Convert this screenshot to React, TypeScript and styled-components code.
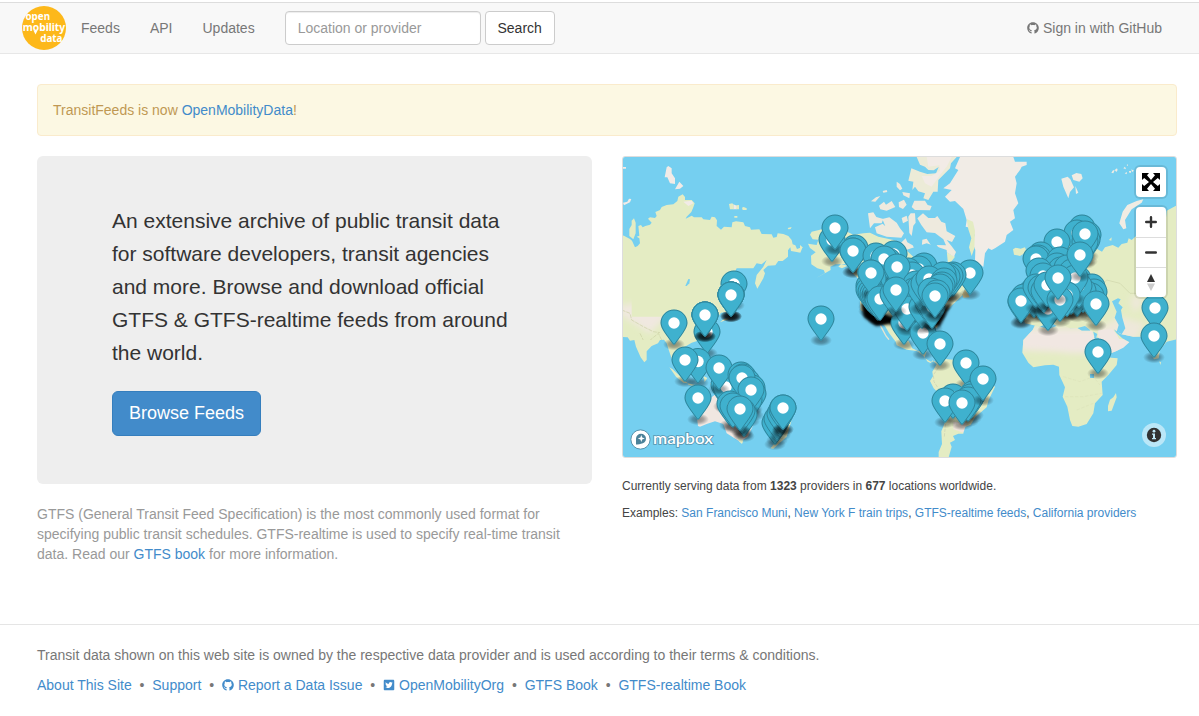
import React from "react";
import styled, { createGlobalStyle } from "styled-components";
import { FaGithub, FaTwitterSquare } from "react-icons/fa";

const GlobalStyle = createGlobalStyle`
  *, *::before, *::after { box-sizing: border-box; }
  body {
    margin: 0;
    background: #fff;
    color: #333;
    font: 14px/20px "Liberation Sans", Arial, sans-serif;
  }
`;

const Page = styled.div`
  padding-top: 2px;
  min-height: 716px;
  overflow: hidden;
`;

const Navbar = styled.header`
  display: flex;
  align-items: center;
  height: 52px;
  padding: 0 37px 0 22px;
  background: #f8f8f8;
  border-top: 1px solid #ddd;
  border-bottom: 1px solid #e7e7e7;
`;

const Logo = styled.svg`
  display: block;
  width: 44px;
  height: 44px;
`;

const NavLink = styled.a`
  padding: 15px;
  color: #777;
  text-decoration: none;
  white-space: nowrap;
`;

const SearchForm = styled.form`
  display: flex;
  gap: 4px;
  margin-left: 15px;
`;

const SearchInput = styled.input`
  width: 196px;
  height: 34px;
  padding: 6px 12px;
  font: inherit;
  border: 1px solid #ccc;
  border-radius: 4px;
  background: #fff;
  box-shadow: inset 0 1px 1px rgba(0, 0, 0, 0.075);
  &::placeholder { color: #999; opacity: 1; }
`;

const SearchButton = styled.button`
  width: 70px;
  height: 34px;
  padding: 0;
  font: inherit;
  color: #333;
  border: 1px solid #ccc;
  border-radius: 4px;
  background: #fff;
`;

const SignIn = styled.a`
  display: flex;
  align-items: center;
  gap: 4px;
  margin-left: auto;
  color: #777;
  text-decoration: none;
`;

const Link = styled.a`
  color: #428bca;
  text-decoration: none;
`;

const Container = styled.main`
  padding: 0 22px 0 37px;
`;

const Alert = styled.div`
  margin-top: 30px;
  padding: 15px;
  height: 52px;
  color: #c09853;
  background: #fcf8e3;
  border: 1px solid #faebcc;
  border-radius: 4px;
`;

const Columns = styled.div`
  display: grid;
  grid-template-columns: 555px 555px;
  gap: 30px;
  margin-top: 20px;
  height: 468px;
`;

const Hero = styled.section`
  height: 328px;
  padding: 48px 75px;
  background: #eee;
  border-radius: 6px;
`;

const HeroText = styled.p`
  margin: 0 0 22px;
  font-size: 21px;
  line-height: 33px;
  white-space: nowrap;
`;

const HeroButton = styled.a`
  display: block;
  width: 149px;
  height: 45px;
  line-height: 43px;
  font-size: 18px;
  text-align: center;
  color: #fff;
  background: #428bca;
  border: 1px solid #357ebd;
  border-radius: 6px;
`;

const Explanation = styled.p`
  margin: 20px 0 0;
  color: #999;
  white-space: nowrap;
`;

const MapFrame = styled.div`
  position: relative;
  height: 302px;
  border: 1px solid #ddd;
  border-radius: 3px;
  overflow: hidden;
`;

const MapCanvas = styled.svg`
  display: block;
  width: 553px;
  height: 300px;
`;

const Controls = styled.div`
  position: absolute;
  top: 10px;
  right: 10px;
  display: flex;
  flex-direction: column;
  gap: 10px;
`;

const ControlGroup = styled.div`
  width: 30px;
  border-radius: 4px;
  background: #fff;
  box-shadow: 0 0 0 2px rgba(0, 0, 0, 0.1);
`;

const Control = styled.div`
  display: flex;
  align-items: center;
  justify-content: center;
  height: 30px;
  & + & { border-top: 1px solid #ddd; }
  svg { display: block; }
`;

const Info = styled.div`
  position: absolute;
  right: 10px;
  bottom: 10px;
  width: 24px;
  height: 24px;
  border-radius: 12px;
  background: rgba(255, 255, 255, 0.5);
  svg { display: block; }
`;

const Small = styled.p<{ $top: number }>`
  margin: ${(p) => p.$top}px 0 0;
  font-size: 12px;
  line-height: 17px;
  color: #444;
  white-space: nowrap;
`;

const Footer = styled.footer`
  padding: 20px 37px 0;
  border-top: 1px solid #e5e5e5;
  color: #777;
`;

const FooterText = styled.p`
  margin: 0 0 10px;
`;

const FooterLinks = styled.div`
  display: flex;
  white-space: pre;
`;

const FooterLink = styled(Link)`
  display: flex;
  align-items: center;
  gap: 4px;
`;

const Dot = styled.span`
  width: 20.6px;
  text-align: center;
`;

type Point = [number, number];

const asiaPins: Point[] = [
  [734, 284], [731, 295], [731, 295], [731, 295], [731, 295], [731, 295],
  [674, 323], [707, 332], [705, 315], [705, 315], [705, 315], [705, 315],
  [698, 361.5], [685, 360], [724, 385], [726, 387], [719, 368], [698, 398],
  [741, 375], [743, 377], [747, 382], [752, 388], [753, 394], [749, 400], [742, 378],
  [751, 390], [730, 404], [733, 406], [743, 413], [744, 415], [742, 411], [740, 409],
  [775, 423], [777, 419], [780, 414], [782, 410], [783, 408], [783, 408],
];

const americaPins: Point[] = [
  [821, 319], [832, 240], [835, 228], [855, 248], [853, 251], [853, 251],
  [894, 254], [876, 256], [888, 261], [884, 259], [924, 266], [919, 269],
  [908, 271], [912, 275], [897, 267], [871, 273], [873, 279],
  [970, 273], [953, 275], [950, 276], [947, 277], [943, 275],
  [904, 323], [869, 286], [869, 290], [871, 292], [873, 294], [875, 295], [877, 297],
  [878, 299], [871, 273], [880, 299], [916, 284], [914, 291], [918, 296], [921, 300], [926, 294],
  [905, 305], [907, 309], [923, 333], [922, 307], [928, 303], [931, 304],
  [932, 307], [920, 288], [924, 284], [929, 279], [944, 281], [942, 285], [940, 287],
  [931, 291], [937, 293], [935, 296], [893, 294], [896, 290], [940, 344],
  [966, 363], [953, 397], [973, 394], [971, 397], [968, 400], [983, 379],
  [945, 401], [962, 403],
];

const europePins: Point[] = [
  [1082, 228], [1077, 233], [1088, 235], [1087, 240], [1085, 242], [1085, 234],
  [1057, 242], [1041, 255], [1038, 258], [1036, 259], [1060, 260], [1057, 266],
  [1061, 270], [1067, 268], [1072, 272], [1039, 271], [1043, 276],
  [1078, 279], [1074, 282], [1092, 287], [1094, 292], [1091, 296], [1083, 291],
  [1077, 295], [1071, 293], [1079, 286], [1075, 278], [1080, 255],
  [1032, 292], [1034, 296], [1037, 291], [1021, 302], [1024, 297], [1021, 301],
  [1048, 309], [1036, 287], [1041, 288], [1044, 291], [1050, 286], [1047, 285],
  [1067, 295], [1060, 300], [1058, 278], [1096, 304], [1155, 308], [1154, 336], [1098, 352],
];

const Pin = ({ at }: { at: Point }) => (
  <g transform={`translate(${at[0] - 13.5} ${at[1] - 13.5})`}>
    <ellipse cx="13.5" cy="34.8" rx="11" ry="6" fill="url(#pin-shadow)" />
    <path
      fill="#3fb1ce"
      d="M27 13.5C27 19.07 20.25 27 14.75 34.5C14 35.5 13 35.5 12.25 34.5C6.75 27 0 19.2 0 13.5C0 6.04 6.04 0 13.5 0S27 6.04 27 13.5Z"
    />
    <path
      fill="none"
      stroke="#000"
      strokeOpacity=".25"
      d="M26.5 13.5C26.5 18.8 19.8 26.7 14.3 34.2C13.8 34.9 13.2 34.9 12.7 34.2C7.2 26.7 .5 18.8 .5 13.5C.5 6.3 6.3 .5 13.5 .5S26.5 6.3 26.5 13.5Z"
    />
    <circle cx="13.5" cy="13.5" r="5.7" fill="#fff" />
  </g>
);

const WorldMap = () => (
  <MapCanvas viewBox="623 157 553 300">
    <defs>
      <radialGradient id="pin-shadow">
        <stop offset="0" stopColor="#000" stopOpacity=".42" />
        <stop offset=".5" stopColor="#000" stopOpacity=".3" />
        <stop offset=".8" stopColor="#000" stopOpacity=".12" />
        <stop offset="1" stopColor="#000" stopOpacity="0" />
      </radialGradient>
      <filter id="soft" x="-30%" y="-30%" width="160%" height="160%">
        <feGaussianBlur stdDeviation="1.6" />
      </filter>
      <filter id="terrain" x="-30%" y="-30%" width="160%" height="160%">
        <feGaussianBlur stdDeviation="9" />
      </filter>
      <clipPath id="asia-clip">
        <path d="M0 255L20 258L35 270V500H290V560L230 600L150 570H0Z" />
      </clipPath>
      <clipPath id="east-clip">
        <path d="M310 400H560V568L510 560L480 590L458 560L430 560L392 552L371 537L380 560L330 565L307 560L300 540Z" />
      </clipPath>
      <clipPath id="africa-clip">
        <path id="africa" d="M135 75L175 88L215 72L240 85L262 84L275 92L307 92L315 120L330 150L345 172L383 175L380 195L355 225L335 245L338 285L315 310L310 340L290 372L265 380L247 378L240 360L232 320L218 290L225 262L208 225L207 200L190 194L165 196L130 202L115 188L97 158L100 120L128 90Z" />
      </clipPath>
    </defs>
    <rect x="623" y="157" width="553" height="300" fill="#75cff0" />

    {/* Asia and Oceania */}
    <g transform="translate(620 150) scale(.33333)" fill="#e4ecc3">
      <path d="M0 255L12 257L20 262L30 267L36 272L45 292L53 288L60 280L58 265L50 260L58 257L55 228L63 225L68 232L76 228L90 224L95 218L84 206L90 202L105 204L110 198L106 186L120 180L125 171L140 165L160 163L172 153L175 140L188 133L195 141L195 150L215 150L224 160L220 172L214 186L200 200L197 206L215 197L222 202L245 202L250 208L270 210L275 200L285 202L291 211L290 228L303 239L312 230L335 232L337 217L348 214L370 217L375 228L390 232L393 239L418 238L425 252L455 253L460 263L470 261L473 250L490 252L505 258L515 270L518 283L526 286L531 297L548 291L541 308L530 306L513 303L511 292L504 301L504 320L488 333L475 333L466 346L444 347L430 360L435 370L430 385L412 416L405 400L410 375L430 350L440 330L425 343L410 340L400 355L350 355L343 368L350 390L366 405L365 440L338 455L330 485L303 488L290 505L270 530L240 570L215 578L195 590L198 608L180 604L165 625L160 640L148 605L140 580L132 569L120 570L114 580L95 588L80 604V630L73 637L62 622L48 590L43 570L30 572L23 562L0 560Z" />
      <path d="M42 205L47 218V250L40 268L28 258V237L35 225V212Z" />
      <path fill="#f2ebe7" d="M145 48L155 55L155 70L165 85V102L150 100L142 82H134L140 52ZM178 95L190 108L180 116L165 118ZM9 158L22 155L27 146L34 147L30 157L12 166ZM9 51H18V56H9ZM340 163L352 168L350 178H340ZM190 155L215 152L220 160L205 168Z" />
      <path d="M327 162L337 160L341 165V178H330ZM349 166L357 165L357 178H349ZM366 173L371 171L380 175V180H368ZM343 198H352V203H343ZM503 234L515 231L512 237L505 238Z" />
      <g clipPath="url(#asia-clip)">
        <path filter="url(#terrain)" fill="#f0e8e0" d="M-10 470L60 455L120 450L190 430L230 450L190 490L140 500L120 520L90 550L10 500Z" />
        <path fill="none" stroke="#cbd0a4" strokeWidth="2" strokeDasharray="12 3" d="M5 480L30 490L35 510L70 530L100 545L120 548M60 550L72 575L85 575L115 550L125 570" />
      </g>
      <path fill="#75cff0" d="M196 408L205 387L210 388L208 400L200 408Z" />
      <path d="M148 652L158 658L190 688L203 700L190 698L168 680ZM203 700L235 707L230 710L205 704ZM250 678L262 684L254 696Z" />
      <path d="M300 517L325 508L330 500L310 508ZM270 700L310 720L340 745H290Z" />
      <path fill="#f0e7e1" d="M234 828L228 780L242 758L275 742L290 730H310L330 755L345 725L365 760L394 800L400 824L384 860L360 875L320 850L310 822L285 814L260 822L240 830Z" />
      <path d="M352 860L370 872L366 882L358 875ZM452 895L475 865L515 810L500 860L460 896Z" />
    </g>

    {/* North America, Arctic islands and Greenland */}
    <g transform="translate(800 150) scale(.33333)" fill="#e4ecc3">
      <path d="M100 225L60 239L35 245L30 254L38 268L55 269L50 285L24 281L30 294L47 307L33 317L34 343L52 355L71 360L75 369L50 383L60 378L92 360L91 350L106 343L145 342L158 370L175 386L182 480L260 530L340 500L410 535L440 480L460 462L488 435L495 415L460 365L450 340L465 320L440 307L390 300L370 292L340 304L315 282L280 270L235 260L210 248L190 250L160 254Z" />
      <path fill="#f1ece6" d="M480 21L465 55L475 60L450 100L430 115L455 120L435 140L450 155L465 153L490 177L500 210L497 230L515 235L524 255L517 277L526 300L525 330L550 351L555 310L565 295L575 300L585 295L615 275L620 255L640 240L630 215L645 205L640 180L655 160L645 130L650 100L645 80L660 60L665 50L680 45L680 35L645 35L640 21Z" />
      <path d="M500 207L519 215L525 242L523 295L515 318L507 292L514 265L505 238Z" />
      <path fill="#ecebd7" d="M350 21H470L453 40L450 55L430 75L415 90L413 125L400 125L385 150L370 145L375 130L355 124L345 110L337 120L340 95L325 92L334 55L360 65L382 72L408 70L416 51L401 61L385 60L375 50L360 44Z" />
      <path fill="#f2ebe6" d="M380 21H455L440 50L420 75L395 110L375 100L365 78L395 78L420 62L418 46L385 50Z" />
      <path fill="#eeeade" d="M343 152H375L383 165L395 168L390 181L345 180L335 171ZM213 154L228 142L241 138L226 155ZM248 123L260 120L262 126L250 128ZM290 95L300 102L307 116L300 121L290 110ZM307 126L330 130L328 145L310 136ZM237 167L252 155L258 164L275 153L286 171L260 182L241 178ZM296 157L312 149L320 164L309 177L297 171ZM204 190L220 187L229 201L250 207L245 220L222 220L210 235ZM225 232L248 221L256 229L247 207L268 202L290 218L300 235L312 250L304 263L260 260L230 250ZM305 204L320 197L324 212L309 220ZM325 200L332 190H345L347 218L340 227L335 258L328 249ZM362 196L369 190L385 204L405 204L412 198L424 215L436 220L440 244L466 258L456 276L440 270L455 289L468 306L462 320L440 307L418 296L410 285L438 286L430 268L405 249L380 247L364 225L352 205ZM367 269L380 266L396 290L381 296L365 294ZM303 278L317 265L322 277L338 286L350 308L325 302Z" />
      <path fill="#75cff0" d="M318 300L340 320L355 360L400 380L430 340L445 355L440 300L380 280Z" />
      <path fill="#c9bf8c" d="M487 433L495 417L503 430L509 442L490 443Z" />
      <path d="M0 285L8 292L0 300ZM115 350L123 342L143 347L126 355Z" />
    </g>

    {/* Central and South America */}
    <g transform="translate(800 300) scale(.33333)" fill="#e4ecc3">
      <path d="M250 70L267 99L287 125L290 136L320 149L351 153L370 167L383 185L392 189L397 181L410 193L397 215L399 229L390 243L401 265L415 279L431 330L434 370L424 394L426 432L416 456V472H446L455 440L450 428L465 420L459 408L475 401H490V383L512 374L527 350L560 322L566 300L585 260L565 242L510 198L465 180L437 177L415 190L402 182L395 187L373 174L380 154L355 154L337 145L327 125L300 90L280 70Z" />
      <path fill="none" stroke="#e7e5d0" strokeWidth="4" d="M241 76L258 108L267 119" />
      <path fill="#efe4da" d="M460 365L500 370L490 398L460 388Z" />
      <path fill="none" stroke="#c8ceb0" strokeWidth="2" strokeDasharray="10 4" d="M415 203L400 225L402 245L418 270L440 335L433 410" />
    </g>

    {/* Europe and Russia */}
    <g transform="translate(990 150) scale(.33333)" fill="#e4ecc3">
      <path d="M560 166L530 182L525 235L490 240L445 252L425 270L416 265L412 278L395 282L385 293L368 285L345 292L336 305L315 293L285 240L265 240L225 305L190 330L165 360L130 402L110 435L90 460L105 520L150 530L180 515L210 535L260 535L285 528L300 540L307 560L330 565L350 615L385 600L417 576L397 565L380 550L371 537L392 552L430 560L458 560L475 600L492 628L506 625L510 600L530 575L560 568Z" />
      <path d="M69 298L77 293L92 296L105 292L110 306L90 318L72 314ZM357 270L365 262L364 272Z" />
      <path fill="#f0ece3" d="M460 148L455 158L425 178L405 210L409 235L400 238L388 220L398 185L412 165L440 153ZM214 86L233 80L241 88L252 112L240 126L235 145L220 110ZM245 76L259 69L274 72L278 85L268 95L250 90ZM256 108L265 128L258 132ZM364 68L369 61H374L370 70ZM374 60L381 55L383 60L379 66ZM400 55L405 50L408 58ZM404 70L411 66L410 73ZM410 45L414 43L413 49ZM417 63H423V68H418ZM424 58L432 62L426 66Z" />
      <g clipPath="url(#east-clip)">
        <path fill="#eee8da" filter="url(#terrain)" d="M420 440H455V465L430 490ZM325 535L390 500L465 520L440 570L360 610Z" />
      </g>
      <path fill="#75cff0" d="M366 454L384 445L392 448L385 460L398 472L393 480L397 503L406 535L395 553L380 545L386 525L374 503L380 485Z" />
      <path fill="none" stroke="#d6ddb3" strokeWidth="3" d="M320 420L350 390L390 400L420 430L470 430" />
    </g>

    {/* Africa */}
    <g transform="translate(990 300) scale(.33333)">
      <use href="#africa" fill="#e4ecc3" />
      <g clipPath="url(#africa-clip)">
        <path filter="url(#terrain)" fill="#f1e7e2" d="M90 85L320 85L380 155L330 160L245 160L200 155L90 150Z" />
        <path fill="none" stroke="#dce3ba" strokeWidth="2" strokeDasharray="10 5" d="M220 230L270 245L310 230L330 255M225 290H280L335 280M260 330L310 310" />
      </g>
      <path fill="#e4ecc3" d="M378 279L380 292L365 332L354 334L354 318L360 299L370 292ZM508 184L513 187L511 195Z" />
      <path fill="#75cff0" d="M310 95L322 102L318 114L330 139L344 166L337 170L316 125ZM300 222H312V234H300Z" />
      <path fill="#f1e7e2" d="M325 90L367 88L380 103L388 117L400 118L418 127L400 143L375 155L352 163L333 130L324 108Z" />
    </g>

    {/* Merged shadows below the densest clusters */}
    <path filter="url(#soft)" fill="#000" d="M861 302L864 317L876 326L890 324L899 330L920 326L940 326L952 302L930 320L890 316Z" />
    <path filter="url(#soft)" fill="#000" opacity=".6" d="M1027 313L1045 319L1077 313L1087 305L1086 314L1066 318L1040 321Z" />
    {[...asiaPins, ...americaPins, ...europePins].map((at, i) => (
      <Pin key={i} at={at} />
    ))}

    {/* Mapbox wordmark */}
    <circle cx="640.5" cy="439.5" r="9.6" fill="#fff" stroke="#4a819a" strokeOpacity=".8" strokeWidth="1" />
    <path d="M636 444.5V438.8A5 5 0 1 1 641 443.8Q639 444.8 636 444.5Z" fill="#4c8299" />
    <path d="M641.3 435L642.2 437.6L644.8 438.5L642.2 439.4L641.3 442L640.4 439.4L637.8 438.5L640.4 437.6Z" fill="#fff" />
    <text
      x="653"
      y="443.5"
      textLength="60"
      lengthAdjust="spacingAndGlyphs"
      fontFamily="Lato, sans-serif"
      fontSize="15.5"
      fontWeight="600"
      fill="#fff"
      stroke="#4a819a"
      strokeOpacity=".75"
      strokeWidth="1.6"
      paintOrder="stroke"
    >
      mapbox
    </text>
  </MapCanvas>
);

export default function App() {
  return (
    <Page>
      <GlobalStyle />
      <Navbar>
        <Logo viewBox="0 0 44 44">
          <circle cx="22" cy="22" r="22" fill="#fdb81a" />
          <text fill="#fff" fontFamily="Noto Sans, sans-serif" fontWeight="700" fontSize="10">
            <tspan x="3.5" y="13.6" textLength="24.5" lengthAdjust="spacingAndGlyphs">open</tspan>
            <tspan x="0.7" y="25.4" textLength="42.5" lengthAdjust="spacingAndGlyphs">mobility</tspan>
            <tspan x="18.3" y="35.6" textLength="22.2" lengthAdjust="spacingAndGlyphs">data</tspan>
          </text>
          <path d="M11.5 24.5H15.5L13.5 28.5Z" fill="#fff" />
        </Logo>
        <NavLink>Feeds</NavLink>
        <NavLink>API</NavLink>
        <NavLink>Updates</NavLink>
        <SearchForm>
          <SearchInput placeholder="Location or provider" />
          <SearchButton type="button">Search</SearchButton>
        </SearchForm>
        <SignIn><FaGithub size={12} />Sign in with GitHub</SignIn>
      </Navbar>

      <Container>
        <Alert>TransitFeeds is now <Link>OpenMobilityData</Link>!</Alert>
        <Columns>
          <div>
            <Hero>
              <HeroText>
                An extensive archive of public transit data<br />
                for software developers, transit agencies<br />
                and more. Browse and download official<br />
                GTFS &amp; GTFS-realtime feeds from around<br />
                the world.
              </HeroText>
              <HeroButton>Browse Feeds</HeroButton>
            </Hero>
            <Explanation>
              GTFS (General Transit Feed Specification) is the most commonly used format for<br />
              specifying public transit schedules. GTFS-realtime is used to specify real-time transit<br />
              data. Read our <Link>GTFS book</Link> for more information.
            </Explanation>
          </div>
          <div>
            <MapFrame>
              <WorldMap />
              <Controls>
                <ControlGroup>
                  <Control>
                    <svg width="18" height="18" viewBox="0 0 18 18">
                      <path d="M0 0H7L5 2.2L9 7L13 2.2L11 0H18V7L15.8 5L11 9L15.8 13L18 11V18H11L13 15.8L9 11L5 15.8L7 18H0V11L2.2 13L7 9L2.2 5L0 7Z" fill="#000" />
                    </svg>
                  </Control>
                </ControlGroup>
                <ControlGroup>
                  <Control>
                    <svg width="12" height="12" viewBox="0 0 12 12"><path d="M6 1.2V10.8M1.2 6H10.8" stroke="#333" strokeWidth="2.4" strokeLinecap="round" /></svg>
                  </Control>
                  <Control>
                    <svg width="12" height="12" viewBox="0 0 12 12"><path d="M1.2 5.5H10.8" stroke="#333" strokeWidth="2.4" strokeLinecap="round" /></svg>
                  </Control>
                  <Control>
                    <svg width="8" height="17" viewBox="0 0 8 17"><path d="M4 0L8 8H0Z" fill="#333" /><path d="M0 9.5H8L4 17Z" fill="#ccc" /></svg>
                  </Control>
                </ControlGroup>
              </Controls>
              <Info>
                <svg width="24" height="24" viewBox="0 0 24 24">
                  <circle cx="12" cy="12" r="7.2" fill="#333" />
                  <circle cx="12" cy="8.2" r="1.4" fill="#c0e8f7" />
                  <path d="M10 10.5H13V15H14V16.3H10V15H11V11.8H10Z" fill="#c0e8f7" />
                </svg>
              </Info>
            </MapFrame>
            <Small $top={20}>Currently serving data from <b>1323</b> providers in <b>677</b> locations worldwide.</Small>
            <Small $top={10}>
              Examples: <Link>San Francisco Muni</Link>, <Link>New York F train trips</Link>, <Link>GTFS-realtime feeds</Link>, <Link>California providers</Link>
            </Small>
          </div>
        </Columns>
      </Container>

      <Footer>
        <FooterText>
          Transit data shown on this web site is owned by the respective data provider and is used according to their terms &amp; conditions.
        </FooterText>
        <FooterLinks>
          <FooterLink>About This Site</FooterLink><Dot>•</Dot>
          <FooterLink>Support</FooterLink><Dot>•</Dot>
          <FooterLink><FaGithub size={12} />Report a Data Issue</FooterLink><Dot>•</Dot>
          <FooterLink><FaTwitterSquare size={12} />OpenMobilityOrg</FooterLink><Dot>•</Dot>
          <FooterLink>GTFS Book</FooterLink><Dot>•</Dot>
          <FooterLink>GTFS-realtime Book</FooterLink>
        </FooterLinks>
      </Footer>
    </Page>
  );
}
